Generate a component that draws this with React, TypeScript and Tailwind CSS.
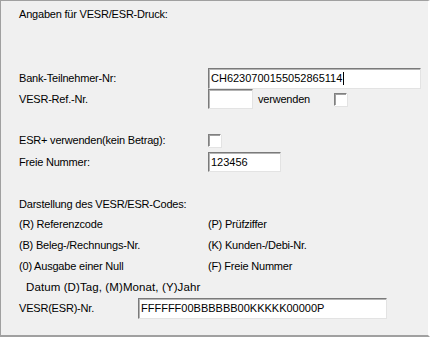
import React from "react";

const inputCls =
  "h-full bg-white border-t border-l border-t-[#7a7a7a] border-l-[#7a7a7a] border-b border-r border-b-[#e3e3e3] border-r-[#e3e3e3] shadow-[inset_1px_1px_0_#b4b4b4] px-[2px] flex items-center text-[11px] text-black leading-none tracking-normal";

function Check() {
  return (
    <div className="w-[13px] h-[13px] bg-white border-t border-l border-t-[#808080] border-l-[#808080] border-b border-r border-b-white border-r-white shadow-[inset_1px_1px_0_#a0a0a0,1px_1px_0_#e3e3e3]" />
  );
}

export default function App() {
  return (
    <div
      className="w-[430px] h-[337px] bg-[#f0f0f0] text-black text-[11px] leading-[13px] tracking-[-0.2px] border-t border-l border-t-[#a0a0a0] border-l-[#a0a0a0] border-b-2 border-b-[#a0a0a0] border-r-2 border-r-white overflow-hidden"
      style={{ fontFamily: '"Liberation Sans", Arial, sans-serif' }}
    >
      <div className="pl-[18px] flex flex-col">
        <div className="mt-[7px] h-[13px]">Angaben für VESR/ESR-Druck:</div>

        <div className="mt-[47px] h-[21px] flex items-center">
          <div className="w-[189px]">Bank-Teilnehmer-Nr:</div>
          <div className={inputCls + " w-[213px]"}>
            CH6230700155052865114
            <span className="inline-block w-px h-[13px] bg-black ml-px" />
          </div>
        </div>

        <div className="h-[20px] flex items-center">
          <div className="w-[189px]">VESR-Ref.-Nr.</div>
          <div className={inputCls + " w-[45px]"} />
          <div className="ml-[5px] w-[76px]">verwenden</div>
          <Check />
        </div>

        <div className="mt-[21px] h-[20px] flex items-center">
          <div className="w-[189px]">ESR+ verwenden(kein Betrag):</div>
          <Check />
        </div>

        <div className="mt-[2px] h-[20px] flex items-center">
          <div className="w-[189px]">Freie Nummer:</div>
          <div className={inputCls + " w-[73px] h-[18px]"}>123456</div>
        </div>

        <div className="mt-[22px] h-[20px] flex items-center">Darstellung des VESR/ESR-Codes:</div>

        <div className="h-[21px] flex items-center">
          <div className="w-[189px]">(R) Referenzcode</div>
          <div>(P) Prüfziffer</div>
        </div>
        <div className="h-[21px] flex items-center">
          <div className="w-[189px]">(B) Beleg-/Rechnungs-Nr.</div>
          <div>(K) Kunden-/Debi-Nr.</div>
        </div>
        <div className="h-[21px] flex items-center">
          <div className="w-[189px]">(0) Ausgabe einer Null</div>
          <div>(F) Freie Nummer</div>
        </div>
        <div className="h-[21px] flex items-center pl-[7px] text-[11.5px] tracking-[0.1px]">Datum (D)Tag, (M)Monat, (Y)Jahr</div>
        <div className="h-[21px] flex items-center">
          <div className="w-[119px]">VESR(ESR)-Nr.</div>
          <div className={inputCls + " w-[249px] h-[20px]"}>FFFFFF00BBBBBB00KKKKK00000P</div>
        </div>
      </div>
    </div>
  );
}
